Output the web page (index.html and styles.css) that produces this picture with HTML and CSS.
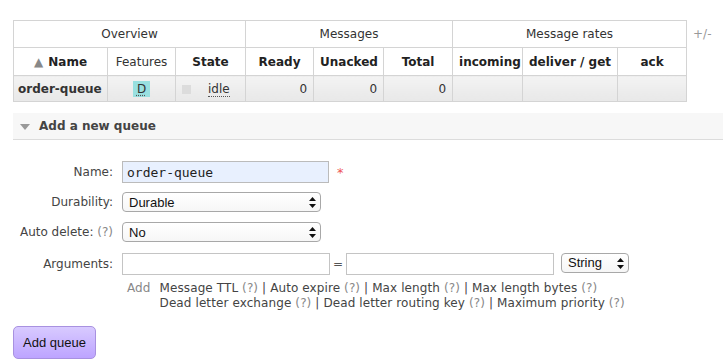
FILE: index.html
```html
<!DOCTYPE html>
<html lang="en">
<head>
    <meta charset="UTF-8">
    <meta name="viewport" content="width=device-width, initial-scale=1.0">
    <title>Queues</title>
    <link rel="stylesheet" href="styles.css">
</head>
<body>
    <div class="page">
        <div class="table-wrap">
            <table class="list">
                <colgroup>
                    <col style="width: 94px">
                    <col style="width: 68px">
                    <col style="width: 70px">
                    <col style="width: 68px">
                    <col style="width: 70px">
                    <col style="width: 69px">
                    <col style="width: 70px">
                    <col style="width: 95px">
                    <col style="width: 69px">
                </colgroup>
                <thead>
                    <tr class="group-row">
                        <th colspan="3">Overview</th>
                        <th colspan="3">Messages</th>
                        <th colspan="3">Message rates</th>
                    </tr>
                    <tr class="col-row">
                        <th><span class="sort-arrow">&#9650;</span> Name</th>
                        <th class="plain">Features</th>
                        <th>State</th>
                        <th>Ready</th>
                        <th>Unacked</th>
                        <th>Total</th>
                        <th>incoming</th>
                        <th>deliver / get</th>
                        <th>ack</th>
                    </tr>
                </thead>
                <tbody>
                    <tr class="data-row">
                        <td class="queue-name">order-queue</td>
                        <td class="center"><abbr class="badge">D</abbr></td>
                        <td class="state-cell"><span class="state-box"></span><abbr class="state">idle</abbr></td>
                        <td class="num">0</td>
                        <td class="num">0</td>
                        <td class="num">0</td>
                        <td></td>
                        <td></td>
                        <td></td>
                    </tr>
                </tbody>
            </table>
            <span class="toggle-cols">+/-</span>
        </div>

        <div class="section-header">
            <span class="section-arrow"></span>
            <span>Add a new queue</span>
        </div>

        <form class="queue-form">
            <div class="form-row">
                <label class="form-label">Name:</label>
                <input type="text" class="name-input" value="order-queue">
                <span class="required">*</span>
            </div>
            <div class="form-row">
                <label class="form-label">Durability:</label>
                <div class="select-wrap wide">
                    <select><option>Durable</option><option>Transient</option></select>
                    <svg class="select-arrows" width="7" height="11" viewBox="0 0 7 11"><path d="M3.5 0 L7 4 L0 4 Z M0 7 L7 7 L3.5 11 Z" fill="#111"/></svg>
                </div>
            </div>
            <div class="form-row">
                <label class="form-label">Auto delete: <span class="help">(?)</span></label>
                <div class="select-wrap wide">
                    <select><option>No</option><option>Yes</option></select>
                    <svg class="select-arrows" width="7" height="11" viewBox="0 0 7 11"><path d="M3.5 0 L7 4 L0 4 Z M0 7 L7 7 L3.5 11 Z" fill="#111"/></svg>
                </div>
            </div>
            <div class="form-row args-row">
                <label class="form-label">Arguments:</label>
                <input type="text" class="arg-input">
                <span class="equals">=</span>
                <input type="text" class="arg-input">
                <div class="select-wrap small">
                    <select><option>String</option><option>Number</option><option>Boolean</option></select>
                    <svg class="select-arrows" width="7" height="11" viewBox="0 0 7 11"><path d="M3.5 0 L7 4 L0 4 Z M0 7 L7 7 L3.5 11 Z" fill="#111"/></svg>
                </div>
            </div>
            <div class="arg-help">
                <span class="add-label">Add</span>
                <div class="arg-links">
                    <div>Message TTL <span class="help">(?)</span> | Auto expire <span class="help">(?)</span> | Max length <span class="help">(?)</span> | Max length bytes <span class="help">(?)</span></div>
                    <div>Dead letter exchange <span class="help">(?)</span> | Dead letter routing key <span class="help">(?)</span> | Maximum priority <span class="help">(?)</span></div>
                </div>
            </div>
            <button type="button" class="add-button">Add queue</button>
        </form>
    </div>
</body>
</html>
```

FILE: styles.css
```css
body {
    margin: 0;
    padding: 0;
    font-family: "DejaVu Sans", Verdana, sans-serif;
    font-size: 12px;
    color: #444;
    background-color: #fff;
}

.page {
    padding: 20px 0 0 13px;
}

.table-wrap {
    display: flex;
    align-items: flex-start;
    gap: 6px;
}

.list {
    border-collapse: collapse;
    table-layout: fixed;
    width: 673px;
}

.list th,
.list td {
    border: 1px solid #d4d4d4;
    padding: 0 6px;
    white-space: nowrap;
}

.group-row th {
    height: 26px;
    font-weight: normal;
    color: #333;
}

.col-row th {
    height: 27px;
    color: #222;
}

.col-row th.plain {
    font-weight: normal;
    color: #333;
}

.sort-arrow {
    color: #888;
    font-size: 12px;
    margin-right: 1px;
}

.data-row td {
    height: 25px;
    background: linear-gradient(#f3f3f3, #e8e8e8);
    color: #333;
}

.queue-name {
    font-weight: bold;
    padding-left: 4px !important;
    color: #222;
}

.center {
    text-align: center;
}

.num {
    text-align: right;
}

abbr {
    text-decoration: none;
    border-bottom: 1px dotted #555;
}

.badge {
    display: inline-block;
    background-color: #99e0e0;
    padding: 1px 4px 0;
    line-height: 15px;
    border-bottom: none;
    text-decoration: underline dotted #555;
    text-underline-offset: 2px;
}

.state-cell {
    text-align: left;
}

.state-box {
    display: inline-block;
    width: 9px;
    height: 9px;
    background-color: #dcdcdc;
    margin-right: 17px;
    vertical-align: -1px;
}

.state {
    line-height: 13px;
}

.toggle-cols {
    color: #999;
    margin-top: 7px;
}

.section-header {
    margin-top: 11px;
    height: 26px;
    background-color: #f7f7f7;
    border-bottom: 1px solid #dcdcdc;
    display: flex;
    align-items: center;
    font-weight: bold;
    color: #444;
}

.section-arrow {
    width: 0;
    height: 0;
    border-left: 5px solid transparent;
    border-right: 5px solid transparent;
    border-top: 6px solid #999;
    margin: 1px 9px 0 7px;
}

.queue-form {
    padding-top: 17px;
}

.form-row {
    display: flex;
    align-items: center;
    height: 30px;
}

.form-label {
    width: 100px;
    text-align: right;
    margin-right: 9px;
}

.help {
    color: #888;
}

.name-input {
    box-sizing: border-box;
    width: 207px;
    height: 22px;
    border: 1px solid #bbb;
    background-color: #e8f0fe;
    font-family: "DejaVu Sans Mono", "Liberation Mono", monospace;
    font-size: 13px;
    color: #222;
    padding: 0 4px;
    outline: none;
}

.required {
    color: #e55;
    margin-left: 8px;
    font-size: 13px;
}

.select-wrap {
    position: relative;
    display: inline-block;
}

.select-wrap select {
    appearance: none;
    -webkit-appearance: none;
    box-sizing: border-box;
    height: 20px;
    border: 1px solid #a8a8a8;
    border-radius: 4px;
    background: linear-gradient(#fff, #f6f6f6);
    font-family: "Liberation Sans", Arial, sans-serif;
    font-size: 13px;
    color: #111;
    padding: 0 6px;
    outline: none;
}

.wide select {
    width: 199px;
}

.small select {
    width: 68px;
}

.select-arrows {
    position: absolute;
    right: 5px;
    top: 5px;
    pointer-events: none;
}

.args-row {
    height: 31px;
    margin-top: 1px;
}

.arg-input {
    box-sizing: border-box;
    width: 208px;
    height: 22px;
    border: 1px solid #c4c4c4;
    background-color: #fff;
    outline: none;
}

.equals {
    width: 16px;
    text-align: center;
    color: #555;
}

.args-row .select-wrap {
    margin-left: 7px;
    margin-top: -2px;
}

.arg-help {
    display: flex;
    line-height: 15px;
    padding-left: 114px;
    margin-top: 2px;
    letter-spacing: 0.1px;
}

.add-label {
    color: #888;
    margin-right: 9px;
}

.arg-links {
    color: #444;
}

.add-button {
    margin-top: 15px;
    height: 33px;
    padding: 0 9px;
    border: 1px solid #a891e0;
    border-radius: 5px;
    background: linear-gradient(#d8caff, #bda4ff);
    font-family: "Liberation Sans", Arial, sans-serif;
    font-size: 13px;
    color: #111;
}
```
